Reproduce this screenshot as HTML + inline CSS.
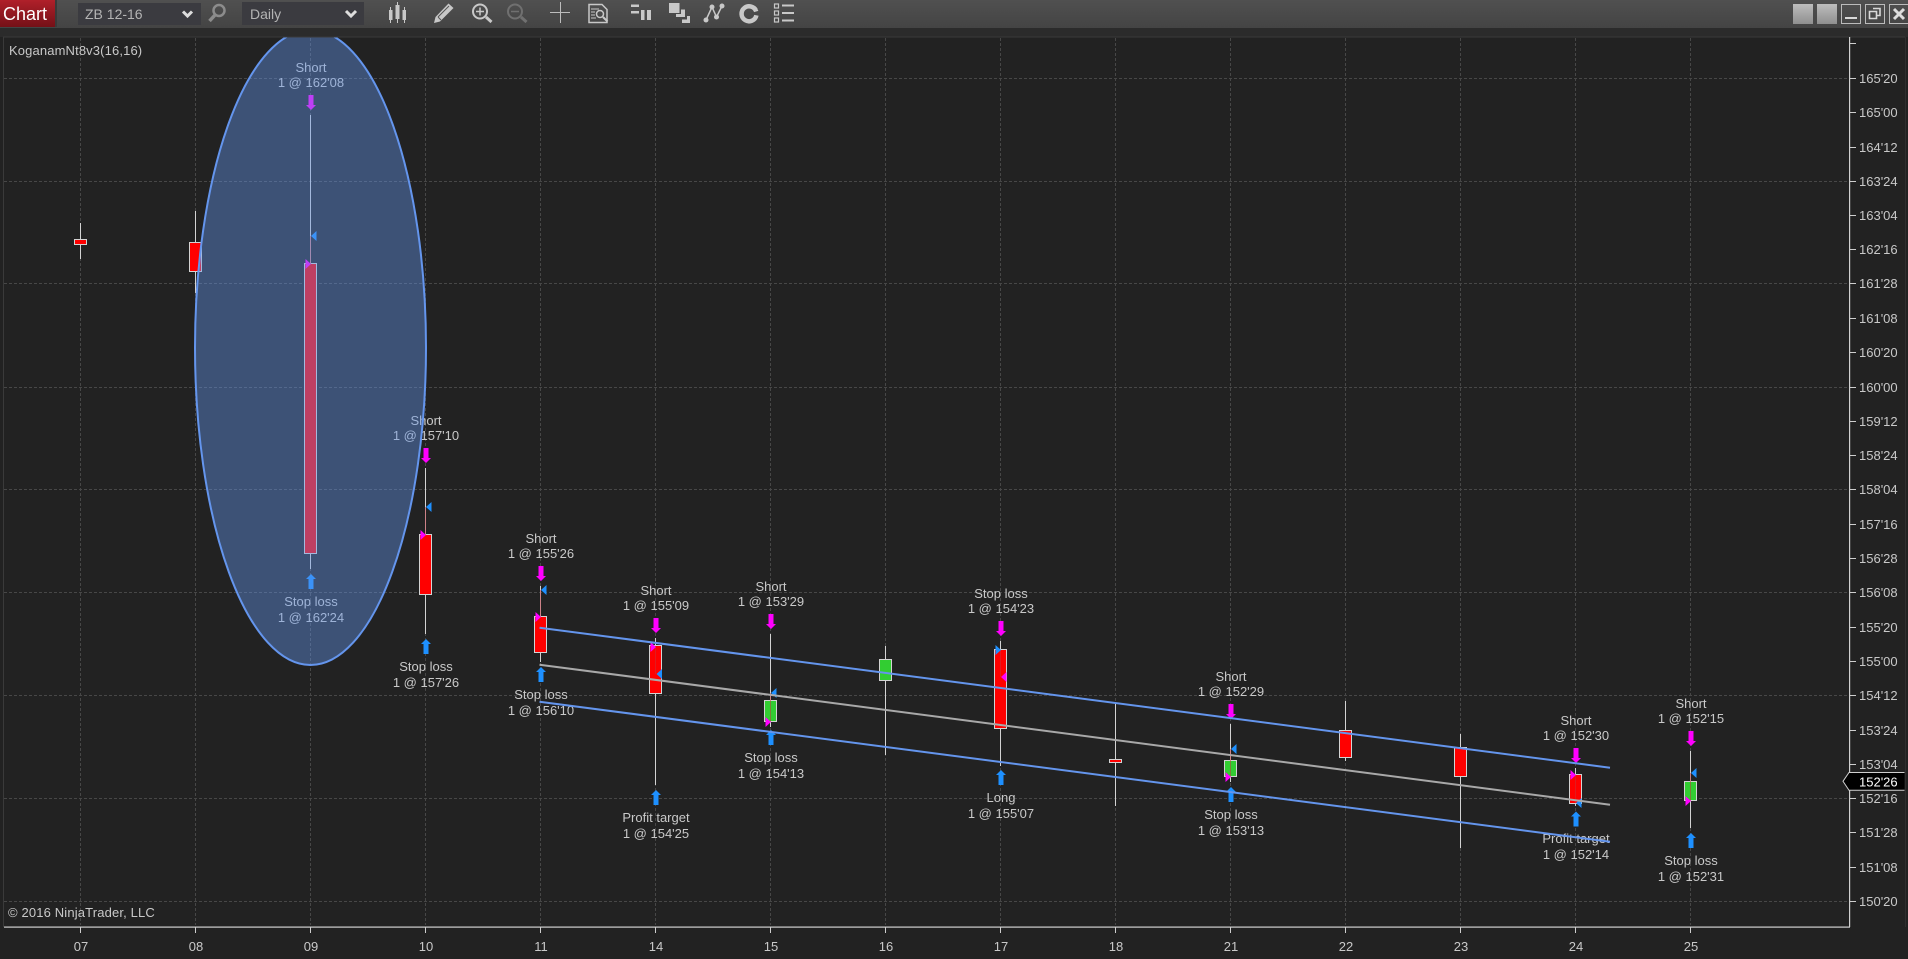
<!DOCTYPE html>
<html><head><meta charset="utf-8"><title>Chart</title>
<style>
html,body{margin:0;padding:0;background:#222;width:1908px;height:959px;overflow:hidden}
svg{display:block}
text{font-family:"Liberation Sans",Arial,sans-serif;font-size:13px;fill:#c9c9c9}
.c text,text.c{text-anchor:middle}
.g line{stroke:#474747;stroke-width:1;stroke-dasharray:3 2}
.t line{stroke:#cfcfcf;stroke-width:1}
.w line{stroke:#d3d3d3;stroke-width:1}
.b rect{stroke:#d3d3d3;stroke-width:1}
.r{fill:#f00}.n{fill:#32cd32}
.m{fill:#f0f}.u{fill:#1e90ff}
.x line{stroke:rgba(200,50,60,.5);stroke-width:1}
.i{fill:none;stroke:#c8c8c8;stroke-width:2}
</style></head><body>
<svg width="1908" height="959" viewBox="0 0 1908 959" xmlns="http://www.w3.org/2000/svg">
<defs>
<linearGradient id="tb" x1="0" y1="0" x2="0" y2="1"><stop offset="0" stop-color="#505050"/><stop offset="1" stop-color="#444"/></linearGradient>
<linearGradient id="rd" x1="0" y1="0" x2="0" y2="1"><stop offset="0" stop-color="#b0202a"/><stop offset="1" stop-color="#741017"/></linearGradient>
<linearGradient id="bt" x1="0" y1="0" x2="0" y2="1"><stop offset="0" stop-color="#bdbdbd"/><stop offset="1" stop-color="#8f8f8f"/></linearGradient>
<clipPath id="ch"><rect x="4" y="37.5" width="1845" height="889"/></clipPath>
</defs>
<rect width="1908" height="959" fill="#222"/>
<!-- toolbar -->
<rect width="1908" height="28" fill="url(#tb)"/>
<rect y="28" width="1908" height="9" fill="#2b2b2b"/>
<rect y="36.5" x="3" width="1902" height="1" fill="#3a3a3a"/>
<rect x="3" y="37" width="1" height="890" fill="#3a3a3a"/>
<rect x="1905" y="37" width="1" height="890" fill="#2f2f2f"/>
<rect x="0" y="0" width="55" height="27" fill="url(#rd)"/>
<rect x="55" y="0" width="2" height="27" fill="#3a3a3a"/>
<text x="3" y="20" style="font-size:18px;fill:#fff">Chart</text>
<rect x="78" y="3" width="123" height="22" fill="#3b3b40"/>
<text x="85" y="19" style="font-size:14px;fill:#b4b4b4">ZB 12-16</text>
<path d="M183 11.500l4.500 4.500 4.500-4.500" fill="none" stroke="#ddd" stroke-width="3"/>
<rect x="242" y="2" width="122" height="23" fill="#3b3b40"/>
<text x="250" y="19" style="font-size:14px;fill:#b4b4b4">Daily</text>
<path d="M346 11l5 5 5-5" fill="none" stroke="#ddd" stroke-width="3"/>
<!-- magnifier -->
<circle cx="219" cy="10.500" r="5.500" fill="none" stroke="#8c8c8c" stroke-width="2.500"/>
<path d="M215 15l-5.500 6" stroke="#8c8c8c" stroke-width="3.500" fill="none"/>
<!-- candles icon -->
<g fill="#c8c8c8"><rect x="390" y="7" width="1" height="16"/><rect x="389" y="10" width="3.500" height="10"/><rect x="397" y="2" width="1" height="21"/><rect x="395.500" y="5" width="4" height="14"/><rect x="404" y="7" width="1" height="16"/><rect x="402.500" y="10" width="3.500" height="10"/></g>
<!-- pencil -->
<path d="M434 23l1.500-6 13-13.500 5 4.500-13.500 13.500z" fill="#c8c8c8"/>
<path d="M438 17l11-11M441 20l-3-3" stroke="#555" stroke-width="1" fill="none"/>
<!-- zoom in/out -->
<circle cx="480" cy="11.500" r="7" class="i"/>
<path d="M486 17l5.500 5" stroke="#c8c8c8" stroke-width="3" fill="none"/>
<path d="M476 11.500h8M480 7.500v8" stroke="#c8c8c8" stroke-width="1.500" fill="none"/>
<circle cx="515" cy="11.500" r="7" fill="none" stroke="#707070" stroke-width="2"/>
<path d="M521 17l5.500 5" stroke="#707070" stroke-width="3" fill="none"/>
<path d="M511 11.500h8" stroke="#707070" stroke-width="1.500" fill="none"/>
<!-- crosshair -->
<path d="M550 12.500h20M560.500 2v21" stroke="#bdbdbd" stroke-width="1" fill="none"/>
<!-- doc search -->
<path d="M589 4.500h13l5 5v13h-18z" fill="none" stroke="#c8c8c8" stroke-width="1.500"/>
<path d="M591 9h8M591 12h4M591 15h4M591 18h5" stroke="#c8c8c8" stroke-width="1" fill="none"/>
<circle cx="600" cy="14" r="3.500" fill="none" stroke="#c8c8c8" stroke-width="1.500"/>
<path d="M603 17l4.500 4.500" stroke="#c8c8c8" stroke-width="2" fill="none"/>
<!-- bars -->
<g fill="#c8c8c8"><rect x="631" y="4.500" width="8" height="2.500"/><rect x="631" y="11" width="8" height="2.500"/><rect x="641" y="10" width="3.500" height="10"/><rect x="647" y="10" width="4" height="10"/></g>
<!-- shapes -->
<g fill="#c8c8c8"><rect x="669" y="3" width="10.500" height="10"/><rect x="681" y="9.500" width="4" height="7"/><rect x="676" y="14" width="9" height="3"/><rect x="687" y="16" width="3" height="7"/><rect x="682" y="19.500" width="8" height="3.500"/></g>
<!-- nodes -->
<path d="M706 20L712 7l4.500 10L722 6" fill="none" stroke="#c8c8c8" stroke-width="1.500"/>
<g fill="#c8c8c8"><circle cx="706" cy="20" r="2.500"/><circle cx="712" cy="7" r="2.500"/><circle cx="716.500" cy="17" r="2.500"/><circle cx="722" cy="6" r="2.500"/></g>
<!-- ring -->
<path d="M756.200 11.500A7.500 7.500 0 1 0 756.400 15.300" fill="none" stroke="#c8c8c8" stroke-width="4.500"/>
<path d="M757 9A9 9 0 0 0 752 5.500" fill="none" stroke="#c8c8c8" stroke-width="1.500"/>
<!-- list -->
<g fill="none" stroke="#c8c8c8" stroke-width="1.200"><rect x="774.500" y="4" width="4" height="4"/><rect x="774.500" y="11" width="4" height="4"/><rect x="774.500" y="18" width="4" height="4"/></g>
<g fill="#c8c8c8"><rect x="782" y="4.500" width="12" height="2"/><rect x="782" y="12" width="12" height="2"/><rect x="782" y="19.500" width="12" height="2"/></g>
<!-- window buttons -->
<rect x="1793" y="4" width="20" height="20" fill="url(#bt)"/>
<rect x="1817" y="4" width="20" height="20" fill="url(#bt)"/>
<rect x="1841.500" y="4.500" width="19" height="19" fill="none" stroke="#bbb"/>
<rect x="1845" y="17" width="12" height="2" fill="#d8d8d8"/>
<rect x="1865.500" y="4.500" width="19" height="19" fill="none" stroke="#bbb"/>
<path d="M1873 8.500h7v7h-3M1869.500 11.500h7v7h-7z" fill="none" stroke="#d8d8d8" stroke-width="1.600"/>
<rect x="1889.500" y="4.500" width="19" height="19" fill="none" stroke="#bbb"/>
<path d="M1894 9l10 10M1904 9l-10 10" stroke="#ddd" stroke-width="3" fill="none"/>

<!-- grid -->
<g class="g">
<line x1="4" x2="1849" y1="78.500" y2="78.500"/><line x1="4" x2="1849" y1="181.500" y2="181.500"/><line x1="4" x2="1849" y1="283.500" y2="283.500"/><line x1="4" x2="1849" y1="387.500" y2="387.500"/><line x1="4" x2="1849" y1="489.500" y2="489.500"/><line x1="4" x2="1849" y1="592.500" y2="592.500"/><line x1="4" x2="1849" y1="695.500" y2="695.500"/><line x1="4" x2="1849" y1="798.500" y2="798.500"/><line x1="4" x2="1849" y1="901.500" y2="901.500"/>
<line x1="80.500" x2="80.500" y1="38" y2="925"/><line x1="195.500" x2="195.500" y1="38" y2="925"/><line x1="310.500" x2="310.500" y1="38" y2="925"/><line x1="425.500" x2="425.500" y1="38" y2="925"/><line x1="540.500" x2="540.500" y1="38" y2="925"/><line x1="655.500" x2="655.500" y1="38" y2="925"/><line x1="770.500" x2="770.500" y1="38" y2="925"/><line x1="885.500" x2="885.500" y1="38" y2="925"/><line x1="1000.500" x2="1000.500" y1="38" y2="925"/><line x1="1115.500" x2="1115.500" y1="38" y2="925"/><line x1="1230.500" x2="1230.500" y1="38" y2="925"/><line x1="1345.500" x2="1345.500" y1="38" y2="925"/><line x1="1460.500" x2="1460.500" y1="38" y2="925"/><line x1="1575.500" x2="1575.500" y1="38" y2="925"/><line x1="1690.500" x2="1690.500" y1="38" y2="925"/>
</g>
<!-- axes -->
<rect x="4" y="926.500" width="1846" height="1.200" fill="#d0d0d0"/>
<rect x="1849" y="37" width="1.200" height="890" fill="#d0d0d0"/>
<g class="t">
<line x1="1850" x2="1856" y1="43.500" y2="43.500"/><line x1="1850" x2="1856" y1="78.500" y2="78.500"/><line x1="1850" x2="1856" y1="112.500" y2="112.500"/><line x1="1850" x2="1856" y1="147.500" y2="147.500"/><line x1="1850" x2="1856" y1="181.500" y2="181.500"/><line x1="1850" x2="1856" y1="215.500" y2="215.500"/><line x1="1850" x2="1856" y1="249.500" y2="249.500"/><line x1="1850" x2="1856" y1="283.500" y2="283.500"/><line x1="1850" x2="1856" y1="318.500" y2="318.500"/><line x1="1850" x2="1856" y1="352.500" y2="352.500"/><line x1="1850" x2="1856" y1="387.500" y2="387.500"/><line x1="1850" x2="1856" y1="421.500" y2="421.500"/><line x1="1850" x2="1856" y1="455.500" y2="455.500"/><line x1="1850" x2="1856" y1="489.500" y2="489.500"/><line x1="1850" x2="1856" y1="524.500" y2="524.500"/><line x1="1850" x2="1856" y1="558.500" y2="558.500"/><line x1="1850" x2="1856" y1="592.500" y2="592.500"/><line x1="1850" x2="1856" y1="627.500" y2="627.500"/><line x1="1850" x2="1856" y1="661.500" y2="661.500"/><line x1="1850" x2="1856" y1="695.500" y2="695.500"/><line x1="1850" x2="1856" y1="730.500" y2="730.500"/><line x1="1850" x2="1856" y1="764.500" y2="764.500"/><line x1="1850" x2="1856" y1="798.500" y2="798.500"/><line x1="1850" x2="1856" y1="832.500" y2="832.500"/><line x1="1850" x2="1856" y1="867.500" y2="867.500"/><line x1="1850" x2="1856" y1="901.500" y2="901.500"/>
<line x1="80.500" x2="80.500" y1="927" y2="933"/><line x1="195.500" x2="195.500" y1="927" y2="933"/><line x1="310.500" x2="310.500" y1="927" y2="933"/><line x1="425.500" x2="425.500" y1="927" y2="933"/><line x1="540.500" x2="540.500" y1="927" y2="933"/><line x1="655.500" x2="655.500" y1="927" y2="933"/><line x1="770.500" x2="770.500" y1="927" y2="933"/><line x1="885.500" x2="885.500" y1="927" y2="933"/><line x1="1000.500" x2="1000.500" y1="927" y2="933"/><line x1="1115.500" x2="1115.500" y1="927" y2="933"/><line x1="1230.500" x2="1230.500" y1="927" y2="933"/><line x1="1345.500" x2="1345.500" y1="927" y2="933"/><line x1="1460.500" x2="1460.500" y1="927" y2="933"/><line x1="1575.500" x2="1575.500" y1="927" y2="933"/><line x1="1690.500" x2="1690.500" y1="927" y2="933"/>
</g>
<!-- price labels -->
<g>
<text x="1859" y="83">165'20</text><text x="1859" y="117">165'00</text><text x="1859" y="152">164'12</text><text x="1859" y="186">163'24</text><text x="1859" y="220">163'04</text><text x="1859" y="254">162'16</text><text x="1859" y="288">161'28</text><text x="1859" y="323">161'08</text><text x="1859" y="357">160'20</text><text x="1859" y="392">160'00</text><text x="1859" y="426">159'12</text><text x="1859" y="460">158'24</text><text x="1859" y="494">158'04</text><text x="1859" y="529">157'16</text><text x="1859" y="563">156'28</text><text x="1859" y="597">156'08</text><text x="1859" y="632">155'20</text><text x="1859" y="666">155'00</text><text x="1859" y="700">154'12</text><text x="1859" y="735">153'24</text><text x="1859" y="769">153'04</text><text x="1859" y="803">152'16</text><text x="1859" y="837">151'28</text><text x="1859" y="872">151'08</text><text x="1859" y="906">150'20</text>
</g>
<g class="c">
<text x="81" y="951">07</text><text x="196" y="951">08</text><text x="311" y="951">09</text><text x="426" y="951">10</text><text x="541" y="951">11</text><text x="656" y="951">14</text><text x="771" y="951">15</text><text x="886" y="951">16</text><text x="1001" y="951">17</text><text x="1116" y="951">18</text><text x="1231" y="951">21</text><text x="1346" y="951">22</text><text x="1461" y="951">23</text><text x="1576" y="951">24</text><text x="1691" y="951">25</text>
</g>
<text x="9" y="55" style="letter-spacing:.13px">KoganamNt8v3(16,16)</text>
<text x="8" y="917" style="letter-spacing:.15px">© 2016 NinjaTrader, LLC</text>

<!-- wicks -->
<g class="w">
<line x1="80.500" x2="80.500" y1="223" y2="259"/>
<line x1="195.500" x2="195.500" y1="211" y2="293"/>
<line x1="310.500" x2="310.500" y1="115" y2="569"/>
<line x1="425.500" x2="425.500" y1="468" y2="634"/>
<line x1="540.500" x2="540.500" y1="586" y2="662"/>
<line x1="655.500" x2="655.500" y1="638" y2="785"/>
<line x1="770.500" x2="770.500" y1="634" y2="727"/>
<line x1="885.500" x2="885.500" y1="646" y2="755"/>
<line x1="1000.500" x2="1000.500" y1="641" y2="766"/>
<line x1="1115.500" x2="1115.500" y1="703" y2="806"/>
<line x1="1230.500" x2="1230.500" y1="724" y2="782"/>
<line x1="1345.500" x2="1345.500" y1="701" y2="761"/>
<line x1="1460.500" x2="1460.500" y1="734" y2="848"/>
<line x1="1575.500" x2="1575.500" y1="768" y2="806"/>
<line x1="1690.500" x2="1690.500" y1="751" y2="828"/>
</g>
<!-- bodies -->
<g class="b">
<rect class="r" x="74.500" y="239.500" width="12" height="5"/>
<rect class="r" x="189.500" y="242.500" width="12" height="29"/>
<rect class="r" x="304.500" y="263.500" width="12" height="290"/>
<rect class="r" x="419.500" y="534.500" width="12" height="60"/>
<rect class="r" x="534.500" y="616.500" width="12" height="36"/>
<rect class="r" x="649.500" y="645.500" width="12" height="48"/>
<rect class="n" x="764.500" y="700.500" width="12" height="21"/>
<rect class="n" x="879.500" y="659.500" width="12" height="21"/>
<rect class="r" x="994.500" y="649.500" width="12" height="79"/>
<rect class="r" x="1109.500" y="759.500" width="12" height="3"/>
<rect class="n" x="1224.500" y="760.500" width="12" height="16"/>
<rect class="r" x="1339.500" y="730.500" width="12" height="27"/>
<rect class="r" x="1454.500" y="747.500" width="12" height="29"/>
<rect class="r" x="1569.500" y="774.500" width="12" height="29"/>
<rect class="n" x="1684.500" y="781.500" width="12" height="19"/>
</g>
<!-- trade links -->
<g class="x">
<line x1="310.500" x2="310.500" y1="236" y2="264"/>
<line x1="425.500" x2="425.500" y1="507" y2="535"/>
<line x1="540.500" x2="540.500" y1="590" y2="617"/>
<line x1="655.500" x2="655.500" y1="647" y2="674"/>
<line x1="770.500" x2="770.500" y1="693" y2="722"/>
<line x1="1000.500" x2="1000.500" y1="650" y2="677"/>
<line x1="1230.500" x2="1230.500" y1="749" y2="777"/>
<line x1="1575.500" x2="1575.500" y1="775" y2="803"/>
<line x1="1690.500" x2="1690.500" y1="773" y2="801"/>
</g>
<!-- entry/exit triangles -->
<g>
<path class="u" d="M311 236l5.500-5v10z"/><path class="m" d="M311 264l-5.500-5v10z"/>
<path class="u" d="M426 507l5.500-5v10z"/><path class="m" d="M426 535l-5.500-5v10z"/>
<path class="u" d="M541 590l5.500-5v10z"/><path class="m" d="M541 617l-5.500-5v10z"/>
<path class="m" d="M656 647l-5.500-5v10z"/><path class="u" d="M656.500 674l5.500-5v10z"/>
<path class="u" d="M771 693l5.500-5v10z"/><path class="m" d="M771 722l-5.500-5v10z"/>
<path class="u" d="M1001 650l-5.500-5v10z"/><path class="m" d="M1001 677l5.500-5v10z"/>
<path class="u" d="M1231 749l5.500-5v10z"/><path class="m" d="M1231 777l-5.500-5v10z"/>
<path class="m" d="M1576 775l-5.500-5v10z"/><path class="u" d="M1576 803l5.500-5v10z"/>
<path class="u" d="M1691 773l5.500-5v10z"/><path class="m" d="M1691 801l-5.500-5v10z"/>
</g>
<!-- arrows -->
<g>
<path class="m" d="M308.500 95h5v10h2.500l-5 5-5-5h2.500z"/>
<path class="u" d="M311 574l5 5h-2.500v10h-5v-10h-2.500z"/>
<path class="m" d="M423.500 448h5v10h2.500l-5 5-5-5h2.500z"/>
<path class="u" d="M426 639l5 5h-2.500v10h-5v-10h-2.500z"/>
<path class="m" d="M538.500 566h5v10h2.500l-5 5-5-5h2.500z"/>
<path class="u" d="M541 667l5 5h-2.500v10h-5v-10h-2.500z"/>
<path class="m" d="M653.500 618h5v10h2.500l-5 5-5-5h2.500z"/>
<path class="u" d="M656 790l5 5h-2.500v10h-5v-10h-2.500z"/>
<path class="m" d="M768.500 614h5v10h2.500l-5 5-5-5h2.500z"/>
<path class="u" d="M771 730l5 5h-2.500v10h-5v-10h-2.500z"/>
<path class="m" d="M998.500 621h5v10h2.500l-5 5-5-5h2.500z"/>
<path class="u" d="M1001 770l5 5h-2.500v10h-5v-10h-2.500z"/>
<path class="m" d="M1228.500 704h5v10h2.500l-5 5-5-5h2.500z"/>
<path class="u" d="M1231 787l5 5h-2.500v10h-5v-10h-2.500z"/>
<path class="m" d="M1573.500 748h5v10h2.500l-5 5-5-5h2.500z"/>
<path class="u" d="M1576 811.500l5 5h-2.500v10h-5v-10h-2.500z"/>
<path class="m" d="M1688.500 731h5v10h2.500l-5 5-5-5h2.500z"/>
<path class="u" d="M1691 833l5 5h-2.500v10h-5v-10h-2.500z"/>
</g>
<!-- trade labels -->
<g class="c">
<text x="311" y="72">Short</text><text x="311" y="87">1 @ 162'08</text>
<text x="311" y="606">Stop loss</text><text x="311" y="622">1 @ 162'24</text>
<text x="426" y="425">Short</text><text x="426" y="440">1 @ 157'10</text>
<text x="426" y="671">Stop loss</text><text x="426" y="687">1 @ 157'26</text>
<text x="541" y="543">Short</text><text x="541" y="558">1 @ 155'26</text>
<text x="541" y="699">Stop loss</text><text x="541" y="715">1 @ 156'10</text>
<text x="656" y="595">Short</text><text x="656" y="610">1 @ 155'09</text>
<text x="656" y="822">Profit target</text><text x="656" y="838">1 @ 154'25</text>
<text x="771" y="591">Short</text><text x="771" y="606">1 @ 153'29</text>
<text x="771" y="762">Stop loss</text><text x="771" y="778">1 @ 154'13</text>
<text x="1001" y="598">Stop loss</text><text x="1001" y="613">1 @ 154'23</text>
<text x="1001" y="802">Long</text><text x="1001" y="818">1 @ 155'07</text>
<text x="1231" y="681">Short</text><text x="1231" y="696">1 @ 152'29</text>
<text x="1231" y="819">Stop loss</text><text x="1231" y="835">1 @ 153'13</text>
<text x="1576" y="725">Short</text><text x="1576" y="740">1 @ 152'30</text>
<text x="1576" y="843">Profit target</text><text x="1576" y="859">1 @ 152'14</text>
<text x="1691" y="708">Short</text><text x="1691" y="723">1 @ 152'15</text>
<text x="1691" y="865">Stop loss</text><text x="1691" y="881">1 @ 152'31</text>
</g>
<!-- channel -->
<g fill="none" stroke-width="2">
<line x1="539.500" y1="627.700" x2="1610" y2="767.700" stroke="#6495ed"/>
<line x1="539.500" y1="664.700" x2="1610" y2="804.700" stroke="#a9a9a9"/>
<line x1="539.500" y1="701.700" x2="1610" y2="841.700" stroke="#6495ed"/>
</g>
<!-- ellipse -->
<g clip-path="url(#ch)">
<ellipse cx="310.500" cy="347.500" rx="115.500" ry="317.500" fill="rgba(100,149,237,.42)" stroke="#6495ed" stroke-width="2"/>
</g>
<!-- price tag -->
<path d="M1843 781.300l6-9h55.500v18h-55.500z" fill="#000"/>
<path d="M1904.500 772.500h-55.500l-6 8.800 6 9h55.500" fill="none" stroke="#d0d0d0" stroke-width="1"/>
<text x="1859" y="786.500" style="fill:#fff">152'26</text>
</svg>
</body></html>
